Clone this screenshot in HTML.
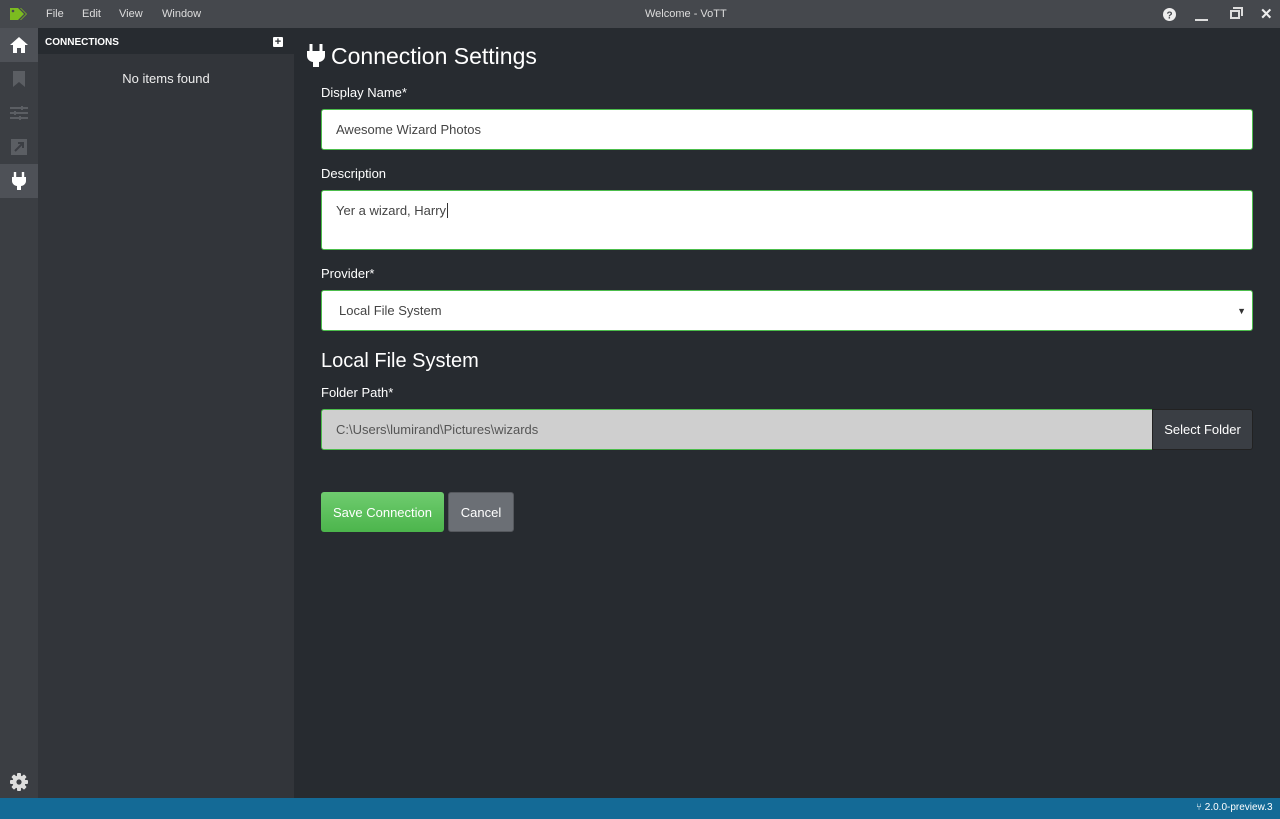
<!DOCTYPE html>
<html><head><style>
*{box-sizing:border-box;margin:0;padding:0}
body{width:1280px;height:819px;overflow:hidden;font-family:"Liberation Sans",sans-serif;background:#272b30;color:#fff;position:relative}
.title{position:absolute;left:0;top:0;width:1280px;height:28px;background:#45484d;font-size:11px;color:#ddd}
.title span{position:absolute;top:8px}
.side{position:absolute;left:0;top:28px;width:38px;height:770px;background:#3b3e43}
.side .it{position:absolute;left:0;width:38px;height:34px;display:flex;align-items:center;justify-content:center}
.panel{position:absolute;left:38px;top:28px;width:256px;height:770px;background:#32353a}
.ph{height:26px;background:#272b30;font-size:10px;font-weight:bold;padding:9px 0 0 7px}
.main{position:absolute;left:294px;top:28px;width:986px;height:770px}
.status{position:absolute;left:0;top:798px;width:1280px;height:21px;background:#146a96;font-size:10px}
label{position:absolute;left:321px;font-size:13px;color:#fff}
.inp{position:absolute;left:321px;width:932px;background:#fff;border:1px solid #4cbd4c;border-radius:3px;color:#444;font-size:13px;padding-left:14px}
.btn{position:absolute;top:492px;height:40px;border-radius:3px;font-size:13px;display:flex;align-items:center;justify-content:center}
</style></head><body>
<div class="title">
<svg style="position:absolute;left:9px;top:7px" width="18" height="14" viewBox="0 0 18 14"><path d="M1 1h8l6 6-6 6H1z" fill="#7cbb20"/><path d="M11 1h1l6 6-6 6h-1l6-6z" fill="#7cbb20"/><circle cx="4" cy="4" r="1.3" fill="#45484d"/></svg>
<span style="left:46px">File</span><span style="left:82px">Edit</span><span style="left:119px">View</span><span style="left:162px">Window</span>
<span style="left:645px">Welcome - VoTT</span>
<svg style="position:absolute;left:1163px;top:8px" width="13" height="13"><circle cx="6.5" cy="6.5" r="6.5" fill="#eee"/><text x="6.5" y="10.5" font-size="10" font-weight="bold" text-anchor="middle" fill="#45484d" font-family="Liberation Sans">?</text></svg>
<div style="position:absolute;left:1195px;top:19px;width:13px;height:2px;background:#ddd"></div>
<div style="position:absolute;left:1230px;top:10px;width:10px;height:9px;border:2px solid #ddd"></div><div style="position:absolute;left:1233px;top:7px;width:10px;height:9px;border-top:2px solid #ddd;border-right:2px solid #ddd"></div>
<span style="left:1260px;top:5px;font-size:15px;font-weight:bold;color:#eee">✕</span>
</div>
<div class="side">
<div class="it" style="top:0;background:#4e5157"><svg width="20" height="18" viewBox="0 0 20 18"><path d="M10 1L1 9h3v8h4v-5h4v5h4V9h3z" fill="#fff"/></svg></div>
<div class="it" style="top:34px"><svg width="12" height="16"><path d="M0 0h12v16l-6-5-6 5z" fill="#5b5e63"/></svg></div>
<div class="it" style="top:68px"><svg width="18" height="14"><path d="M0 2h18M0 7h18M0 12h18" stroke="#5b5e63" stroke-width="2"/><path d="M12 0v4M5 5v4M10 10v4" stroke="#5b5e63" stroke-width="2"/></svg></div>
<div class="it" style="top:102px"><svg width="16" height="16"><rect width="16" height="16" fill="#5b5e63"/><path d="M4 12L12 4M7 4h5v5" stroke="#3b3e43" stroke-width="2" fill="none"/></svg></div>
<div class="it" style="top:136px;background:#4e5157"><svg width="14" height="18"><path d="M3 0v5M11 0v5" stroke="#fff" stroke-width="2.4"/><path d="M0 5h14v4c0 3-3 5-5 5v4H5v-4c-2 0-5-2-5-5z" fill="#fff"/></svg></div>
<svg style="position:absolute;left:10px;top:745px" width="18" height="18" viewBox="0 0 18 18"><g fill="#ddd"><circle cx="9" cy="9" r="6.5"/><rect x="7" y="0" width="4" height="18" rx="1"/><rect x="0" y="7" width="18" height="4" rx="1"/><rect x="7" y="0" width="4" height="18" rx="1" transform="rotate(45 9 9)"/><rect x="7" y="0" width="4" height="18" rx="1" transform="rotate(-45 9 9)"/></g><circle cx="9" cy="9" r="2.6" fill="#3b3e43"/></svg>
</div>
<div class="panel"><div class="ph">CONNECTIONS</div>
<div style="position:absolute;left:235px;top:9px;width:10px;height:10px;background:#fff;border-radius:1px;color:#272b30;font-size:11px;line-height:10px;text-align:center;font-weight:bold">+</div>
<div style="text-align:center;font-size:13px;margin-top:17px;color:#eee">No items found</div></div>
<svg style="position:absolute;left:307px;top:44px" width="18" height="24"><path d="M4 0v7M14 0v7" stroke="#fff" stroke-width="3"/><path d="M0 7h18v5c0 4-4 6-6 6v5H6v-5c-2 0-6-2-6-6z" fill="#fff"/></svg>
<div style="position:absolute;left:331px;top:43px;font-size:23px">Connection Settings</div>
<label style="top:85px">Display Name*</label>
<div class="inp" style="top:109px;height:41px;line-height:40px">Awesome Wizard Photos</div>
<label style="top:166px">Description</label>
<div class="inp" style="top:190px;height:60px;padding-top:12px">Yer a wizard, Harry<span style="border-left:1px solid #333;margin-left:1px"></span></div>
<label style="top:266px">Provider*</label>
<div class="inp" style="top:290px;height:41px;line-height:40px;padding-left:17px">Local File System<span style="position:absolute;right:6px;font-size:9px;color:#333">▼</span></div>
<div style="position:absolute;left:321px;top:350px;font-size:20px">Local File System</div>
<label style="top:385px">Folder Path*</label>
<div class="inp" style="top:409px;height:41px;line-height:40px;width:832px;background:#cfcfcf;color:#555;border-radius:3px 0 0 3px">C:\Users\lumirand\Pictures\wizards</div>
<div style="position:absolute;left:1152px;top:409px;width:101px;height:41px;background:#3a3e44;border:1px solid #222;border-radius:0 3px 3px 0;font-size:13px;line-height:39px;text-align:center">Select Folder</div>
<div class="btn" style="left:321px;width:123px;background:linear-gradient(#6fcc6f,#4cb54c)">Save Connection</div>
<div class="btn" style="left:448px;width:66px;background:#6b6f75;border:1px solid #55585d">Cancel</div>
<div class="status"><span style="position:absolute;left:1196px;top:4px">⑂ 2.0.0-preview.3</span></div>
</body></html>
